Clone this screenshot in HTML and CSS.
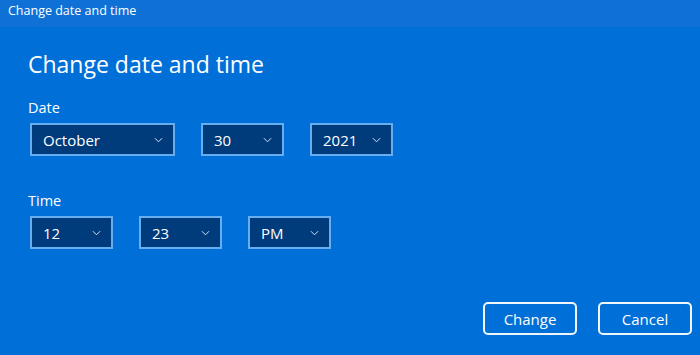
FILE: index.html
```html
<!DOCTYPE html>
<html>
<head>
<meta charset="utf-8">
<link rel="stylesheet" href="styles.css">
</head>
<body>
<div class="window">
  <div class="titlebar">Change date and time</div>
  <div class="content">
    <h1 class="heading">Change date and time</h1>
    <div class="label label-date">Date</div>
    <div class="row">
      <div class="select wide"><span>October</span><svg class="chev" viewBox="0 0 10 6"><path d="M1 1 L5 5 L9 1" /></svg></div>
      <div class="select"><span>30</span><svg class="chev" viewBox="0 0 10 6"><path d="M1 1 L5 5 L9 1" /></svg></div>
      <div class="select"><span>2021</span><svg class="chev" viewBox="0 0 10 6"><path d="M1 1 L5 5 L9 1" /></svg></div>
    </div>
    <div class="label label-time">Time</div>
    <div class="row">
      <div class="select"><span>12</span><svg class="chev" viewBox="0 0 10 6"><path d="M1 1 L5 5 L9 1" /></svg></div>
      <div class="select"><span>23</span><svg class="chev" viewBox="0 0 10 6"><path d="M1 1 L5 5 L9 1" /></svg></div>
      <div class="select"><span>PM</span><svg class="chev" viewBox="0 0 10 6"><path d="M1 1 L5 5 L9 1" /></svg></div>
    </div>
    <div class="buttons">
      <button class="btn">Change</button>
      <button class="btn">Cancel</button>
    </div>
  </div>
</div>
</body>
</html>
```
FILE: styles.css
```css
html, body {
  margin: 0;
  padding: 0;
  background: #0070d8;
}
body {
  font-family: "Open Sans", "Noto Sans", "DejaVu Sans", sans-serif;
  color: #ffffff;
  width: 700px;
  height: 355px;
  overflow: hidden;
}
.window {
  display: flex;
  flex-direction: column;
  height: 355px;
}
.titlebar {
  height: 27px;
  background: #0f71d5;
  font-size: 12.5px;
  line-height: 22px;
  padding-left: 8px;
  box-sizing: border-box;
}
.content {
  flex: 1;
  padding: 0 8px 0 28px;
  display: flex;
  flex-direction: column;
}
.heading {
  margin: 22px 0 0 0;
  font-size: 23px;
  font-weight: 400;
  line-height: 30px;
}
.label {
  font-size: 14.5px;
  line-height: 20px;
}
.label-date {
  margin-top: 19px;
}
.label-time {
  margin-top: 35px;
}
.row {
  display: flex;
  gap: 26px;
  margin-top: 5px;
  margin-left: 2px;
}
.select {
  width: 83px;
  height: 33px;
  box-sizing: border-box;
  border: 2px solid #66aef0;
  background: #003b7c;
  display: flex;
  align-items: center;
  justify-content: space-between;
  padding: 0 10px 0 11px;
  font-size: 15px;
}
.select.wide {
  width: 145px;
}
.chev {
  width: 9px;
  height: 6px;
  fill: none;
  stroke: #d6e6f6;
  stroke-width: 1.1;
}
.buttons {
  display: flex;
  justify-content: flex-end;
  gap: 21px;
  margin-top: auto;
  margin-bottom: 20px;
}
.btn {
  width: 94px;
  height: 33px;
  box-sizing: border-box;
  border: 2px solid #eef5fd;
  border-radius: 5px;
  background: #0070d8;
  color: #ffffff;
  font-family: "Open Sans", "Noto Sans", sans-serif;
  font-size: 15px;
  padding: 0;
}
```
